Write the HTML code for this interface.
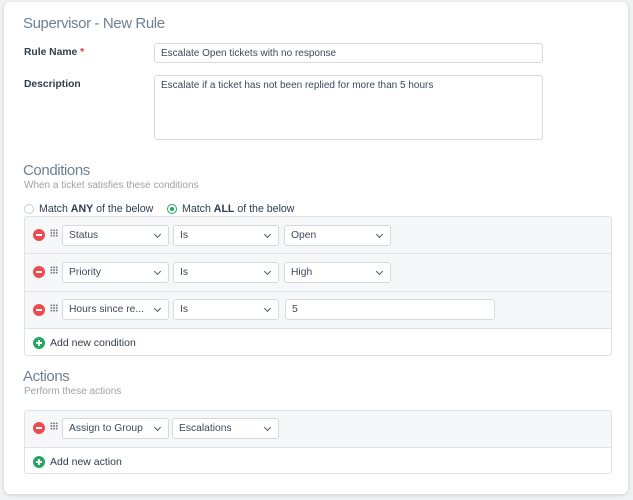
<!DOCTYPE html>
<html><head><style>
*{box-sizing:border-box;margin:0;padding:0}
body{width:633px;height:500px;background:#f1f2f4;font-family:"Liberation Sans",sans-serif;position:relative;overflow:hidden;color:#2c3e50}
.card{position:absolute;left:4px;top:2px;width:624px;height:492px;background:#fff;border-radius:6px;box-shadow:0 1px 4px rgba(0,0,0,.15)}
.a{position:absolute}
h1{position:absolute;font-weight:normal;font-size:15px;color:#6f8094;letter-spacing:-.4px}
.lbl{font-weight:bold;font-size:10.3px;color:#2f3d4c}
.inp{position:absolute;border:1px solid #d5dae0;border-radius:3px;background:#fff;font-size:10px;color:#3b4a59;padding:4px 6px}
.sub{font-size:10px;color:#9aa3ad}
.box{position:absolute;left:24px;width:588px;border:1px solid #dfe3e8;border-radius:3px;overflow:hidden}
.row{position:absolute;left:0;width:100%;background:#f6f7f9;border-bottom:1px solid #dfe3e8}
.sel{position:absolute;height:21px;border:1px solid #d5dae0;border-radius:3px;background:#fff;font-size:10.3px;color:#3b4a59;padding:4px 6px}
.dd:after{content:"";position:absolute;right:8px;top:6px;width:4px;height:4px;border-right:1.3px solid #4a5866;border-bottom:1.3px solid #4a5866;transform:rotate(45deg)}
.min{position:absolute;left:8px;width:12px;height:12px;border-radius:50%;background:#ee4b4f}
.min:after{content:"";position:absolute;left:3px;top:5px;width:6px;height:2px;background:#fff}
.plus{position:absolute;left:8px;width:12px;height:12px;border-radius:50%;background:#22a95f}
.plus:before{content:"";position:absolute;left:3px;top:5px;width:6px;height:2px;background:#fff}
.plus:after{content:"";position:absolute;left:5px;top:3px;width:2px;height:6px;background:#fff}
.grip{position:absolute;left:25px;width:8px;height:8px;background-image:radial-gradient(circle,#6b7784 0.8px,transparent 1px);background-size:2.7px 2.7px}
.add{position:absolute;left:25px;font-size:10.5px;color:#2f3d4c}
</style></head><body>
<div class="card"></div>
<h1 style="left:23px;top:15px">Supervisor - New Rule</h1>
<div class="a lbl" style="left:24px;top:47px">Rule Name <span style="color:#e5333a">*</span></div>
<div class="inp" style="left:154px;top:43px;width:389px;height:20px;padding-top:4px">Escalate Open tickets with no response</div>
<div class="a lbl" style="left:24px;top:79px">Description</div>
<div class="inp" style="left:154px;top:75px;width:389px;height:65px">Escalate if a ticket has not been replied for more than 5 hours</div>
<h1 style="left:23px;top:162px">Conditions</h1>
<div class="a sub" style="left:24px;top:180px">When a ticket satisfies these conditions</div>
<div class="a" style="left:24px;top:204px;width:10px;height:10px;border:1px solid #c9ced4;border-radius:50%"></div>
<div class="a" style="left:39px;top:203px;font-size:10.6px;color:#2f3d4c">Match <b>ANY</b> of the below</div>
<div class="a" style="left:167px;top:204px;width:10px;height:10px;border:1.5px solid #22a95f;border-radius:50%"><div style="position:absolute;left:1.5px;top:1.5px;width:4px;height:4px;border-radius:50%;background:#22a95f"></div></div>
<div class="a" style="left:182px;top:203px;font-size:10.6px;color:#2f3d4c">Match <b>ALL</b> of the below</div>
<div class="box" style="top:216px;height:140px">
 <div class="row" style="top:0;height:37px"><div class="min" style="top:12px"></div><div class="grip" style="top:12px"></div>
  <div class="sel dd" style="left:37px;top:8px;width:107px">Status</div><div class="sel dd" style="left:148px;top:8px;width:106px">Is</div><div class="sel dd" style="left:259px;top:8px;width:107px">Open</div></div>
 <div class="row" style="top:37px;height:38px"><div class="min" style="top:12px"></div><div class="grip" style="top:12px"></div>
  <div class="sel dd" style="left:37px;top:8px;width:107px">Priority</div><div class="sel dd" style="left:148px;top:8px;width:106px">Is</div><div class="sel dd" style="left:259px;top:8px;width:107px">High</div></div>
 <div class="row" style="top:75px;height:37px"><div class="min" style="top:12px"></div><div class="grip" style="top:12px"></div>
  <div class="sel dd" style="left:37px;top:7px;width:107px">Hours since re...</div><div class="sel dd" style="left:148px;top:7px;width:106px">Is</div><div class="sel" style="left:260px;top:7px;width:210px;">5</div></div>
 <div class="plus" style="top:120px"></div><div class="add" style="top:120px">Add new condition</div>
</div>
<h1 style="left:23px;top:368px">Actions</h1>
<div class="a sub" style="left:24px;top:386px">Perform these actions</div>
<div class="box" style="top:410px;height:64px">
 <div class="row" style="top:0;height:37px"><div class="min" style="top:11px"></div><div class="grip" style="top:11px"></div>
  <div class="sel dd" style="left:37px;top:7px;width:107px">Assign to Group</div><div class="sel dd" style="left:147px;top:7px;width:107px">Escalations</div></div>
 <div class="plus" style="top:45px"></div><div class="add" style="top:45px">Add new action</div>
</div>
</body></html>
